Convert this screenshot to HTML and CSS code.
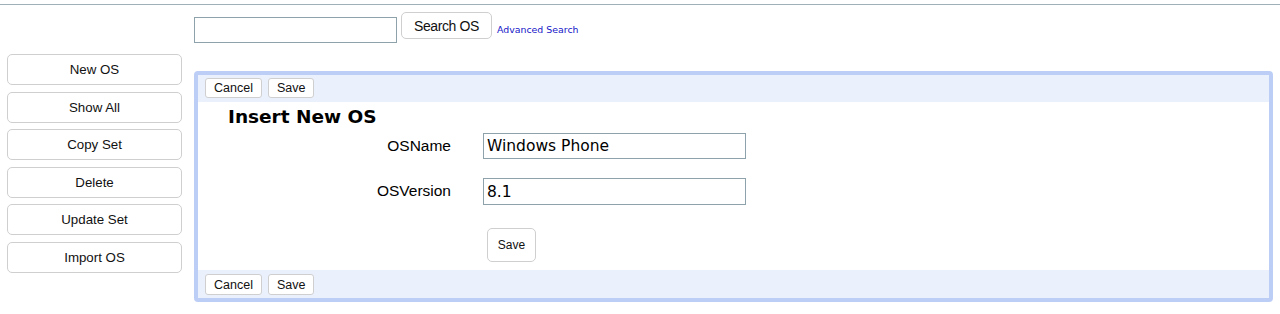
FILE: index.html
```html
<!DOCTYPE html>
<html lang="en">
<head>
  <meta charset="UTF-8" />
  <meta name="viewport" content="width=device-width, initial-scale=1.0"/>
  <title>OS</title>
  <link rel="stylesheet" href="styles.css">
</head>
<body>
  <div class="top-rule"></div>

  <div class="search-bar">
    <input type="text" class="search-input" />
    <button class="search-btn">Search OS</button>
    <a href="#" class="adv-link">Advanced Search</a>
  </div>

  <div class="page">
    <div class="sidebar">
      <button class="side-btn">New OS</button>
      <button class="side-btn">Show All</button>
      <button class="side-btn">Copy Set</button>
      <button class="side-btn">Delete</button>
      <button class="side-btn">Update Set</button>
      <button class="side-btn">Import OS</button>
    </div>

    <div class="panel">
      <div class="toolbar">
        <button class="tool-btn">Cancel</button>
        <button class="tool-btn">Save</button>
      </div>

      <div class="panel-body">
        <h2 class="panel-title">Insert New OS</h2>
        <div class="form">
          <label class="field-label">OSName</label>
          <input type="text" class="field-input" value="Windows Phone" />

          <label class="field-label row2">OSVersion</label>
          <input type="text" class="field-input tall row2" value="8.1" />

          <span></span>
          <button class="save-btn">Save</button>
        </div>
      </div>

      <div class="toolbar bottom">
        <button class="tool-btn">Cancel</button>
        <button class="tool-btn">Save</button>
      </div>
    </div>
  </div>
</body>
</html>
```

FILE: styles.css
```css
* {
  box-sizing: border-box;
}
body {
  margin: 0;
  font-family: 'Liberation Sans', Arial, sans-serif;
  background: #fff;
  color: #000;
}
button {
  font-family: 'Liberation Sans', Arial, sans-serif;
  background: #fff;
  border: 1px solid #cfcfcf;
  border-radius: 4px;
  color: #111;
  cursor: pointer;
  padding: 0;
}
.top-rule {
  margin-top: 4px;
  height: 1px;
  background: #9fb0b8;
}

/* search */
.search-bar {
  display: flex;
  align-items: flex-start;
  height: 49px;
  padding-left: 194px;
}
.search-input {
  width: 203px;
  height: 26px;
  margin-top: 12px;
  border: 1px solid #8ea2ab;
  padding: 2px 4px;
}
.search-btn {
  width: 91px;
  height: 27px;
  margin-top: 7px;
  margin-left: 4px;
  font-size: 14px;
  letter-spacing: -0.4px;
  border-radius: 5px;
}
.adv-link {
  margin-top: 19px;
  margin-left: 5px;
  font-family: 'DejaVu Sans', Verdana, sans-serif;
  font-size: 9.4px;
  line-height: 12px;
  color: #1515c8;
  text-decoration: none;
}

/* layout */
.page {
  display: grid;
  grid-template-columns: 175px 1079px;
  column-gap: 12px;
  padding-left: 7px;
}
.sidebar {
  display: flex;
  flex-direction: column;
  gap: 6.5px;
}
.side-btn {
  height: 31px;
  font-size: 13.3px;
  border-radius: 5px;
}

/* panel */
.panel {
  margin-top: 17px;
  border: 4px solid #bccdf6;
  border-radius: 4px;
}
.toolbar {
  display: flex;
  gap: 6px;
  height: 27px;
  padding: 3px 7px 0;
  background: #eaf0fc;
}
.toolbar.bottom {
  height: 28px;
  padding-top: 4px;
}
.tool-btn {
  height: 20px;
  font-size: 12.5px;
  padding: 0 8px;
  border-radius: 3px;
}
.toolbar.bottom .tool-btn {
  height: 21px;
}
.panel-body {
  height: 168px;
  padding-top: 4px;
}
.panel-title {
  margin: 0 0 5px 30px;
  font-family: 'DejaVu Sans', Verdana, sans-serif;
  font-size: 18.5px;
  line-height: 22px;
  font-weight: bold;
}
.form {
  display: grid;
  grid-template-columns: 253px 263px;
  column-gap: 32px;
  align-items: center;
}
.field-label {
  text-align: right;
  font-size: 15.5px;
  padding-bottom: 1px;
}
input.field-input {
  height: 26px;
  border: 1px solid #8ea2ab;
  padding: 0 3px;
  font-family: Verdana, 'DejaVu Sans', sans-serif;
  font-size: 15.5px;
  color: #000;
}
.row2 {
  margin-top: 19px;
}
input.field-input.tall {
  height: 27px;
}
.save-btn {
  width: 49px;
  height: 34px;
  margin-top: 23px;
  margin-left: 4px;
  font-size: 12px;
  border-radius: 5px;
}
```
